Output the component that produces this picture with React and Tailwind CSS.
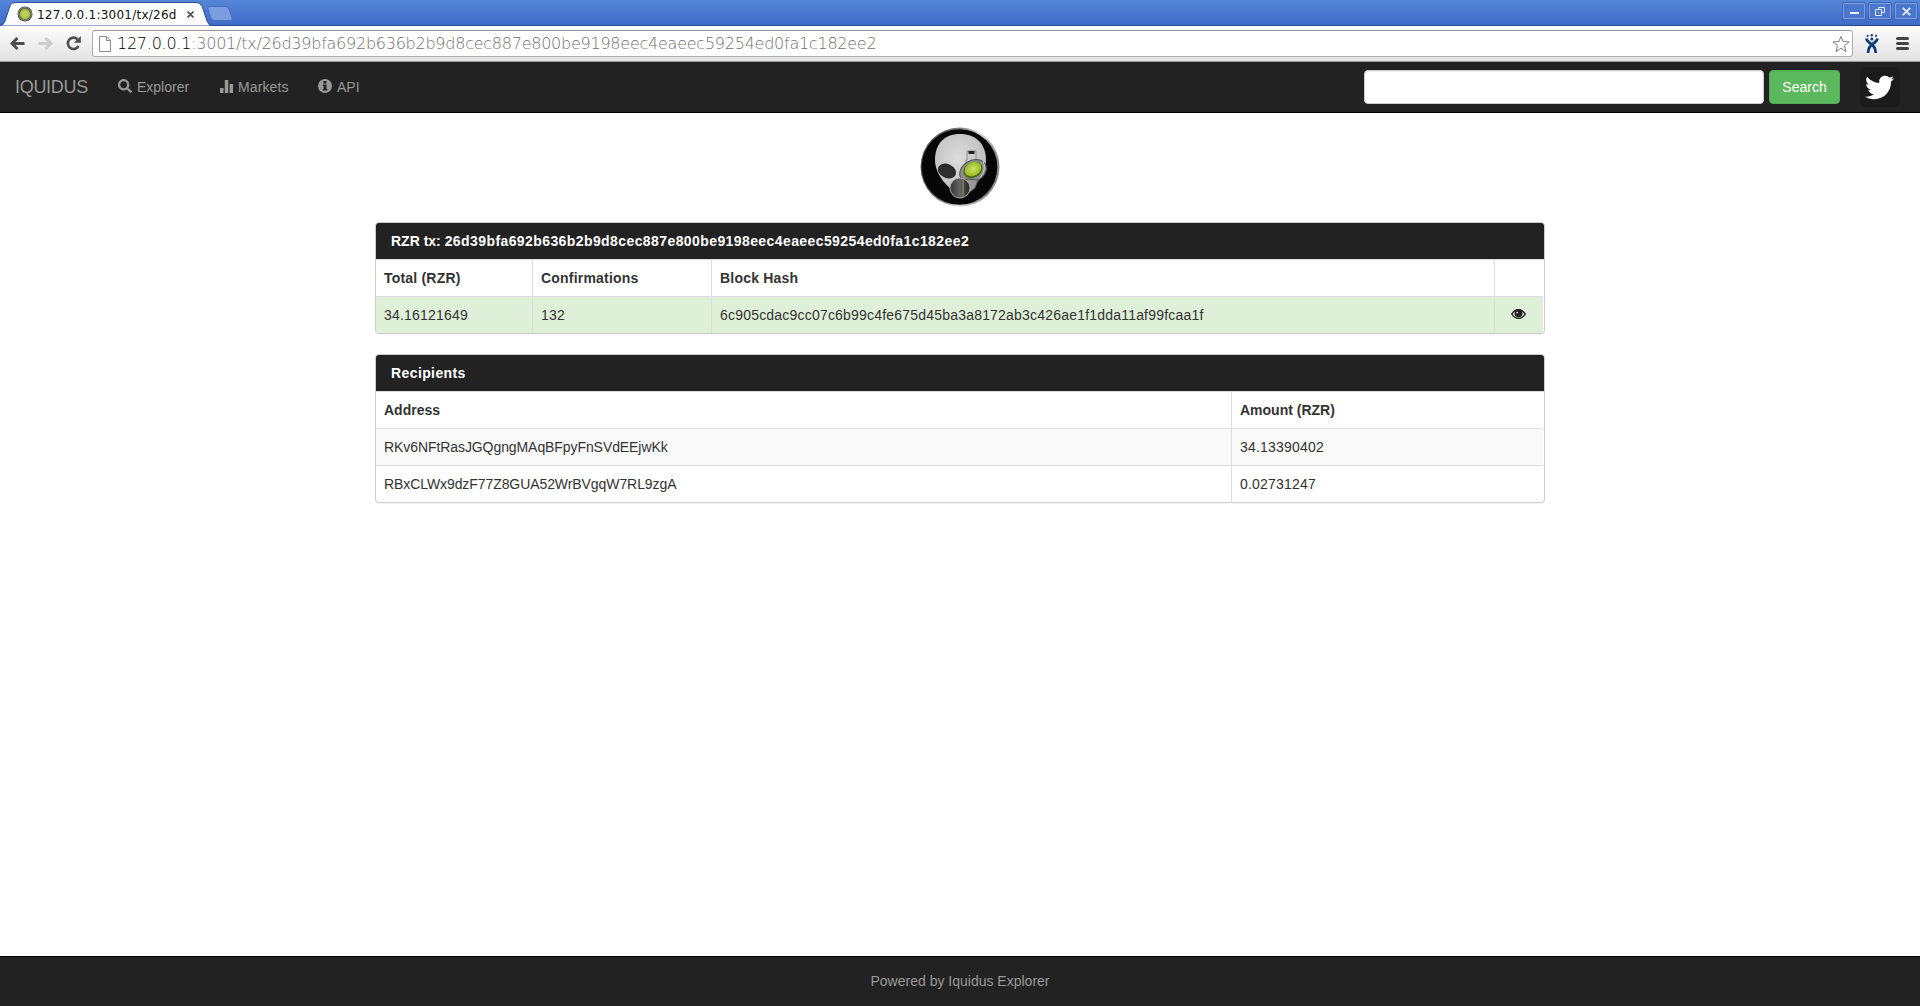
import { FaSearch, FaTwitter } from 'react-icons/fa';

const HASH = '26d39bfa692b636b2b9d8cec887e800be9198eec4eaeec59254ed0fa1c182ee2';

function Favicon() {
  return (
    <svg width="16" height="16" viewBox="0 0 16 16">
      <circle cx="8" cy="8" r="7.5" fill="#3c4038" />
      <circle cx="8" cy="8" r="6.3" fill="none" stroke="#9a9d96" strokeWidth="1" />
      <circle cx="8" cy="8" r="5.2" fill="#a9c63e" />
      <circle cx="8" cy="8" r="3" fill="#bcd063" />
    </svg>
  );
}

function WindowButton({ children }) {
  return (
    <div className="flex h-[18px] w-[24px] items-center justify-center rounded-[2px] border border-[#3e66b8] p-0">
      <div className="flex h-4 w-[22px] items-center justify-center rounded-[1px] border border-[#7d9fe0] bg-[#4b78cf]">{children}</div>
    </div>
  );
}

function TitleBar() {
  return (
    <div className="flex h-[26px] items-start border-b border-[#2c4a92] bg-linear-to-b from-[#5686d8] to-[#3e6bc7]">
      <div className="relative mt-[2px] h-6 w-[211px] shrink-0">
        <svg className="absolute left-0 top-0" width="211" height="24" viewBox="0 0 211 24">
          <path d="M0 24 Q4 23 5 19 L10 4 Q11 .5 15 .5 H196 Q200 .5 202 4 L207 19 Q209 23.5 211 24 Z" fill="#fdfdfd" stroke="#2f509c" />
        </svg>
        <div className="relative flex h-6 items-center pl-[17px]">
          <Favicon />
          <span className="ml-1 mt-px w-[140px] whitespace-nowrap font-['DejaVu_Sans'] text-[12px] leading-4 tracking-[0.24px] text-[#111]">127.0.0.1:3001/tx/26d</span>
          <svg className="ml-[10px] mt-px" width="7" height="7" viewBox="0 0 7 7" stroke="#555" strokeWidth="1.7"><path d="M.5 .5 6.5 6.5M6.5 .5 .5 6.5" /></svg>
        </div>
      </div>
      <svg className="-ml-1 mt-[6px]" width="26" height="16" viewBox="0 0 26 16"><path d="M2 .5H18Q21 .5 22 3L25 12Q26 14.5 23 14.5H8Q5 14.5 4 12L1 3Q0 .5 2 .5Z" fill="#7a9de0" stroke="#4a70bd" /></svg>
      <div className="ml-auto mr-[2px] mt-[2px] flex gap-[2px]">
        <WindowButton><div className="mt-[3px] h-[2px] w-[9px] bg-[#e8eefb]" /></WindowButton>
        <WindowButton><svg width="10" height="9" viewBox="0 0 10 9" fill="none" stroke="#e4ebfa"><path d="M3.5 2.5V.5H9.5V5.5H7M.5 2.5H6.5V8.5H.5ZM3 5.5H4" /></svg></WindowButton>
        <WindowButton><svg width="9" height="9" viewBox="0 0 9 9" fill="none" stroke="#e8eefb" strokeWidth="1.7"><path d="M.8 .8 8.2 8.2M8.2 .8 .8 8.2" /></svg></WindowButton>
      </div>
    </div>
  );
}

function Toolbar() {
  return (
    <div className="flex h-9 items-start border-b border-[#9a9c98] bg-linear-to-b from-[#fdfdfd] to-[#e2e2e2]">
      <svg className="ml-[10px] mt-[11px]" width="15" height="13" viewBox="0 0 15 13" fill="none" stroke="#4d4d4d" strokeWidth="3"><path d="M7.5 1 2 6.5 7.5 12M2 6.5H14.5" /></svg>
      <svg className="ml-[13px] mt-[11px]" width="15" height="13" viewBox="0 0 15 13" fill="none" stroke="#cdcdcd" strokeWidth="3"><path d="M7.5 1 13 6.5 7.5 12M13 6.5H.5" /></svg>
      <svg className="ml-[13px] mt-[10px]" width="16" height="15" viewBox="0 0 16 15"><path d="M12.5 10.2A5.7 5.7 0 1 1 11.5 3.2" fill="none" stroke="#4d4d4d" strokeWidth="2.6" /><path d="M8 6.8H14.8V0Z" fill="#4d4d4d" /></svg>
      <div className="ml-[10px] mt-1 flex h-[27px] w-[1761px] items-center rounded-[3px] border border-[#b0b0b0] border-t-[#989898] bg-white">
        <svg className="ml-[6px]" width="12" height="16" viewBox="0 0 12 16" fill="#fff" stroke="#8a8a8a"><path d="M.5 .5H7.5L11.5 4.5V15.5H.5ZM7.5 .5V4.5H11.5" /></svg>
        <span className="ml-[6px] whitespace-nowrap font-['DejaVu_Sans'] text-[16px] font-extralight leading-5 tracking-[-0.245px] text-[#707070]"><span className="text-black">127.0.0.1</span>:3001/tx/{HASH}</span>
        <svg className="ml-auto mr-[2px]" width="18" height="18" viewBox="0 0 19 18" fill="#fff" stroke="#777" strokeLinejoin="round"><path d="M9.5 1 11.7 6.4 18 6.8 13.2 10.7 14.8 17 9.5 13.5 4.2 17 5.8 10.7 1 6.8 7.3 6.4Z" /></svg>
      </div>
      <svg className="ml-3 mt-2" width="14" height="19" viewBox="0 0 14 19" fill="#0c3e7c">
        <circle cx="2.7" cy="1.8" r="1.1" /><circle cx="6.8" cy="1.2" r="1.2" /><circle cx="11" cy="1.8" r="1.1" /><circle cx="6.8" cy="5" r="1.5" />
        <path d="M1.3 4.5Q2 7.5 5.5 9.5 10.5 12.5 10.8 19M12.5 4.5Q11.8 7.5 8.3 9.5 3.3 12.5 3 19" fill="none" stroke="#0c3e7c" strokeWidth="2.7" />
      </svg>
      <div className="ml-[17px] mt-[11px] flex w-[13px] flex-col gap-[2px]">
        <div className="h-[3px] rounded-sm bg-[#444]" /><div className="h-[3px] rounded-sm bg-[#444]" /><div className="h-[3px] rounded-sm bg-[#444]" />
      </div>
    </div>
  );
}

function Navbar() {
  return (
    <nav className="flex h-[51px] items-center border-b border-black bg-[#222] text-[14px] text-[#999]">
      <span className="ml-[15px] w-[73px] whitespace-nowrap text-[18px] leading-5 tracking-[-0.3px]">IQUIDUS</span>
      <FaSearch className="-mt-[3px] ml-[30px] size-[14px]" />
      <span className="ml-[5px] w-[53px] leading-5">Explorer</span>
      <svg className="-mt-px ml-[30px]" width="14" height="13" viewBox="0 0 14 13" fill="#999"><path d="M0 8H3.5V13H0ZM4.8 0H8.3V13H4.8ZM9.6 4H13V13H9.6Z" /></svg>
      <span className="ml-1 w-[50px] leading-5 tracking-[0.1px]">Markets</span>
      <svg className="-mt-[2px] ml-[30px]" width="14" height="14" viewBox="0 0 14 14"><circle cx="7" cy="7" r="7" fill="#999" /><path d="M5.5 2H8.5V4.5H5.5ZM4.8 5.5H8.5V10H9.3V11.5H4.8V10H5.6V7H4.8Z" fill="#222" /></svg>
      <span className="ml-[5px] leading-5">API</span>
      <div className="ml-auto h-[34px] w-[400px] rounded-[4px] border border-[#ccc] bg-white shadow-[inset_0_1px_1px_rgba(0,0,0,0.075)]" />
      <button className="ml-[5px] h-[34px] w-[71px] rounded-[4px] border border-[#4cae4c] bg-[#5cb85c] text-[14px] leading-5 text-white">Search</button>
      <div className="ml-5 mr-5 flex size-10 items-center justify-center rounded-[6px] bg-[#1b1b1b]"><FaTwitter className="mr-px size-[29px] text-white" /></div>
    </nav>
  );
}

function Logo() {
  return (
    <svg width="80" height="80" viewBox="0 0 80 80">
      <defs>
        <linearGradient id="rim" x1="0" y1="0" x2="1" y2=".3"><stop offset="0" stopColor="#444" /><stop offset=".45" stopColor="#777" /><stop offset=".7" stopColor="#ddd" /><stop offset="1" stopColor="#888" /></linearGradient>
        <radialGradient id="head" cx=".45" cy=".4" r=".6"><stop offset="0" stopColor="#dcdcdc" /><stop offset="1" stopColor="#bdbdbd" /></radialGradient>
        <radialGradient id="lens"><stop offset="0" stopColor="#d4e069" /><stop offset="1" stopColor="#93bd20" /></radialGradient>
        <linearGradient id="mask"><stop offset="0" stopColor="#333" /><stop offset=".5" stopColor="#666" /><stop offset="1" stopColor="#222" /></linearGradient>
      </defs>
      <circle cx="40" cy="40" r="39.5" fill="url(#rim)" />
      <circle cx="39.5" cy="40" r="37.8" fill="#070707" />
      <path d="M40 7C56 7 66 17 66 33 66 47 55 62 41 68 27 62 15 47 15 33 15 17 24 7 40 7Z" fill="url(#head)" />
      <ellipse cx="27" cy="44" rx="9.5" ry="7" transform="rotate(25 27 44)" fill="#2d2d2d" />
      <path d="M47 24H56V33H58V39H46V33H47Z" fill="#ccc" stroke="#777" strokeWidth=".7" /><path d="M48.5 24H54.5V27H48.5Z" fill="#222" />
      <ellipse cx="53" cy="44" rx="14" ry="10.5" transform="rotate(-28 53 44)" fill="#8d8d8d" stroke="#555" />
      <path d="M63 34Q67 42 60 51" fill="none" stroke="#ccc" />
      <ellipse cx="53" cy="43" rx="10" ry="7.7" transform="rotate(-28 53 43)" fill="#4c6d14" />
      <ellipse cx="53" cy="42" rx="8.8" ry="6.7" transform="rotate(-28 53 42)" fill="url(#lens)" />
      <path d="M46 52 58 53 55 61 46 68Z" fill="#999" stroke="#555" />
      <circle cx="40" cy="61" r="10" fill="url(#mask)" stroke="#aaa" />
      <path d="M43 52V70" stroke="#a58d67" />
    </svg>
  );
}

function Panel({ title, children }) {
  return (
    <section className="mx-auto mb-5 w-[1170px] overflow-hidden rounded-[4px] border border-[#ccc] bg-white shadow-[0_1px_1px_rgba(0,0,0,0.05)]">
      <div className="h-[37px] border-b border-[#ddd] bg-[#222] px-[15px] py-2 font-bold leading-5 text-white">{title}</div>
      {children}
    </section>
  );
}

export default function App() {
  return (
    <div className="flex h-[1006px] w-[1920px] flex-col overflow-hidden bg-white font-['Liberation_Sans',sans-serif] text-[14px] leading-5 text-[#333]">
      <TitleBar />
      <Toolbar />
      <Navbar />
      <main className="flex-1">
        <div className="flex justify-center pb-[15px] pt-[14px]"><Logo /></div>
        <Panel title={<><span>RZR tx: </span><span className="tracking-[0.41px]">{HASH}</span></>}>
          <div className="grid grid-cols-[157px_179px_783px_48px] font-bold tracking-[0.2px] [&>div]:h-9 [&>div]:border-r [&>div]:border-[#ddd] [&>div]:p-2 [&>div:last-child]:border-r-0">
            <div>Total (RZR)</div><div>Confirmations</div><div>Block Hash</div><div />
          </div>
          <div className="mr-px grid grid-cols-[157px_179px_783px_48px] border-t border-[#ddd] bg-[#dff0d8] tracking-[0.2px] [&>div]:h-9 [&>div]:border-r [&>div]:border-[#ddd] [&>div]:p-2 [&>div:last-child]:border-r-0">
            <div>34.16121649</div><div>132</div>
            <div>6c905cdac9cc07c6b99c4fe675d45ba3a8172ab3c426ae1f1dda11af99fcaa1f</div>
            <div className="flex justify-center"><svg className="mr-px mt-[3px]" width="15" height="12" viewBox="0 0 15 12"><path d="M.8 6C4 .2 11 .2 14.2 6 11 11.8 4 11.8 .8 6Z" fill="none" stroke="#222" strokeWidth="1.5" /><circle cx="7.5" cy="5.3" r="4" fill="#222" /><circle cx="6.2" cy="4.6" r=".9" fill="#dff0d8" /></svg></div>
          </div>
        </Panel>
        <Panel title={<span className="tracking-[0.4px]">Recipients</span>}>
          <div className="grid grid-cols-[856px_311px] font-bold [&>div]:h-9 [&>div]:p-2 [&>div:first-child]:border-r [&>div]:border-[#ddd]"><div>Address</div><div>Amount (RZR)</div></div>
          <div className="mr-px grid grid-cols-[856px_311px] border-t border-[#ddd] bg-[#f9f9f9] [&>div]:h-9 [&>div]:p-2 [&>div:first-child]:border-r [&>div]:border-[#ddd]"><div className="tracking-[-0.08px]">RKv6NFtRasJGQgngMAqBFpyFnSVdEEjwKk</div><div className="tracking-[0.2px]">34.13390402</div></div>
          <div className="mr-px grid grid-cols-[856px_311px] border-t border-[#ddd] [&>div]:h-9 [&>div]:p-2 [&>div:first-child]:border-r [&>div]:border-[#ddd]"><div className="tracking-[-0.08px]">RBxCLWx9dzF77Z8GUA52WrBVgqW7RL9zgA</div><div className="tracking-[0.2px]">0.02731247</div></div>
        </Panel>
      </main>
      <footer className="flex h-[50px] justify-center border-t border-black bg-[#222] pt-[14px] text-[#999]">Powered by Iquidus Explorer</footer>
    </div>
  );
}
